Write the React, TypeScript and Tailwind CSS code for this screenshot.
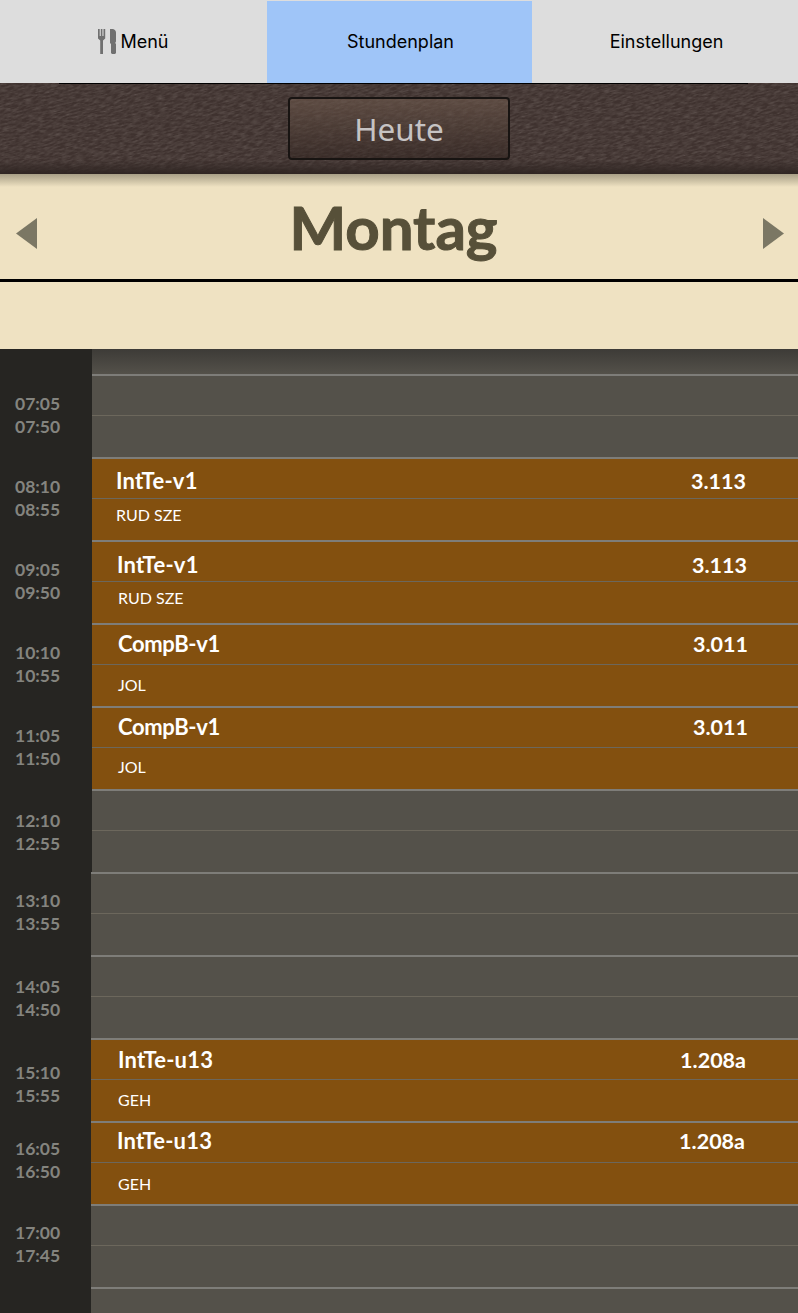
import React from 'react';

type Lesson = {
  title: string;
  room: string;
  teacher: string;
  titleX: string;
  roomX: string;
  teacherX: string;
  titleY: string;
  teacherY: string;
};

type Slot = {
  from: string;
  to: string;
  timeTop: string;
  narrow?: boolean;
  lesson?: Lesson;
};

const slots: Slot[] = [
  {from: '07:05', to: '07:50', timeTop: 'pt-[18px]'},
  {
    from: '08:10',
    to: '08:55',
    timeTop: 'pt-[18px]',
    lesson: {title: 'IntTe-v1', room: '3.113', teacher: 'RUD SZE', titleX: 'pl-[24px] tracking-[0.25px]', roomX: 'pr-[52px]', teacherX: 'pl-[24px]', titleY: 'pt-[8px]', teacherY: 'pt-[4px]'},
  },
  {
    from: '09:05',
    to: '09:50',
    timeTop: 'pt-[18px]',
    lesson: {title: 'IntTe-v1', room: '3.113', teacher: 'RUD SZE', titleX: 'pl-[25px] tracking-[0.25px]', roomX: 'pr-[51px]', teacherX: 'pl-[26px]', titleY: 'pt-[9px]', teacherY: 'pt-[4px]'},
  },
  {
    from: '10:10',
    to: '10:55',
    timeTop: 'pt-[18px]',
    lesson: {title: 'CompB-v1', room: '3.011', teacher: 'JOL', titleX: 'pl-[26px] tracking-[-0.35px]', roomX: 'pr-[50px]', teacherX: 'pl-[26px]', titleY: 'pt-[5px]', teacherY: 'pt-[8px]'},
  },
  {
    from: '11:05',
    to: '11:50',
    timeTop: 'pt-[18px]',
    lesson: {title: 'CompB-v1', room: '3.011', teacher: 'JOL', titleX: 'pl-[26px] tracking-[-0.35px]', roomX: 'pr-[50px]', teacherX: 'pl-[26px]', titleY: 'pt-[5px]', teacherY: 'pt-[7px]'},
  },
  {from: '12:10', to: '12:55', timeTop: 'pt-[20px]'},
  {from: '13:10', to: '13:55', timeTop: 'pt-[17px]', narrow: true},
  {from: '14:05', to: '14:50', timeTop: 'pt-[20px]', narrow: true},
  {
    from: '15:10',
    to: '15:55',
    timeTop: 'pt-[23px]',
    narrow: true,
    lesson: {title: 'IntTe-u13', room: '1.208a', teacher: 'GEH', titleX: 'pl-[27px] tracking-[0.2px]', roomX: 'pr-[52px]', teacherX: 'pl-[27px]', titleY: 'pt-[6px]', teacherY: 'pt-[8px]'},
  },
  {
    from: '16:05',
    to: '16:50',
    timeTop: 'pt-[16px]',
    narrow: true,
    lesson: {title: 'IntTe-u13', room: '1.208a', teacher: 'GEH', titleX: 'pl-[26px] tracking-[0.2px]', roomX: 'pr-[53px]', teacherX: 'pl-[27px]', titleY: 'pt-[4px]', teacherY: 'pt-[9px]'},
  },
  {from: '17:00', to: '17:45', timeTop: 'pt-[17px]', narrow: true},
];

const ForkKnife = () => (
  <svg width="19" height="25" viewBox="0 0 19 25" className="shrink-0" fill="#707070">
    <path d="M0 0h1.700v7h1.100V0h1.600v7h1.100V0h1.700v9.500L5 11.500V25H2.200V11.500L0 9.500z" />
    <path d="M12 0h3c1.600.6 3 1.500 3 3.500v9l-.8 1.500.8 1V24l-1 1h-3l-1-1v-9l-1-1V3z" />
  </svg>
);

const Leather = ({strength}: {strength: number}) => (
  <svg className="absolute inset-0 h-full w-full" aria-hidden="true">
    <filter id="leather" x="0" y="0" width="100%" height="100%">
      <feTurbulence type="fractalNoise" baseFrequency="0.14 0.6" numOctaves="3" seed="7" />
      <feColorMatrix values="0 0 0 0 0.42  0 0 0 0 0.37  0 0 0 0 0.34  1.8 0 0 0 -0.62" />
    </filter>
    <g transform="rotate(-14 400 45)">
      <rect x="-100" y="-240" width="1000" height="570" filter="url(#leather)" opacity={strength} />
    </g>
  </svg>
);

const Tab = ({className, children}: {className: string; children: React.ReactNode}) => (
  <div className={`flex items-center justify-center gap-[3px] pb-px ${className}`}>{children}</div>
);

const TimeCell = ({slot}: {slot: Slot}) => (
  <div
    className={`${slot.timeTop} ${slot.narrow ? 'w-[91px]' : 'w-[92px]'} shrink-0 bg-[#262522] pl-[15px] text-[17.500px] leading-[23px] font-bold text-[#84847f]`}>
    <div>{slot.from}</div>
    <div>{slot.to}</div>
  </div>
);

const SlotBody = ({lesson}: {lesson?: Lesson}) => (
  <div className={`flex min-w-0 flex-1 flex-col border-t-2 border-[#7e7d79] ${lesson ? 'bg-[#83500f]' : 'bg-[#54514a]'}`}>
    <div className="flex h-[40px] items-start justify-between border-b border-[#6c675c] text-[22px] leading-[28px] font-bold text-white">
      {lesson && (
        <>
          <span className={`${lesson.titleX} ${lesson.titleY}`}>{lesson.title}</span>
          <span className={`${lesson.roomX} ${lesson.titleY} text-[21.500px]`}>{lesson.room}</span>
        </>
      )}
    </div>
    {lesson && <div className={`${lesson.teacherX} ${lesson.teacherY} text-[16px] leading-[24px] text-white`}>{lesson.teacher}</div>}
  </div>
);

const App: React.FC = () => {
  return (
    <div className="h-[1313px] w-[798px] overflow-hidden bg-[#262522] font-['Lato',sans-serif]">
      <nav className="flex h-[83px] bg-[#dddddd] text-[18px] text-black font-['Inter',sans-serif]">
        <Tab className="w-[267px] bg-[#dddddd]">
          <ForkKnife />
          <span>Menü</span>
        </Tab>
        <Tab className="mt-px w-[265px] bg-[#9fc5f8] pl-[2px]">Stundenplan</Tab>
        <Tab className="w-[266px] bg-[#dddddd] pl-[3px]">Einstellungen</Tab>
      </nav>

      <header className="relative flex h-[91px] items-start justify-center overflow-hidden bg-[#3f322f]">
        <Leather strength={0.28} />
        <div className="absolute top-0 left-[59px] h-px w-[689px] bg-black" />
        <div className="absolute inset-x-0 bottom-0 h-[14px] bg-gradient-to-b from-transparent to-[#2f2522]" />
        <button className="relative mt-[14px] h-[63px] w-[222px] overflow-hidden rounded-[4px] border-2 border-[#181412] bg-gradient-to-b from-[#5c4a41] to-[#382b27] font-['Noto_Sans',sans-serif] text-[31.500px] text-[#c6c3c3]">
          <Leather strength={0.15} />
          <span className="relative">Heute</span>
        </button>
      </header>

      <section className="relative h-[175px] bg-[#efe2c2]">
        <div className="absolute inset-x-0 top-0 h-[13px] bg-gradient-to-b from-[#a89f86] to-[#efe2c2]" />
        <div className="relative flex h-[108px] items-center justify-between border-b-[3px] border-black pr-[14px] pl-[16px]">
          <svg width="21" height="31" viewBox="0 0 21 31" className="mt-[13px]">
            <path d="M21 0V31L0 15.500z" fill="#7b7764" />
          </svg>
          <h1 className="mt-px mr-[13px] text-[60px] leading-none font-bold text-[#575039] [-webkit-text-stroke:1px_#575039]">Montag</h1>
          <svg width="21" height="31" viewBox="0 0 21 31" className="mt-[13px]">
            <path d="M0 0V31L21 15.500z" fill="#7b7764" />
          </svg>
        </div>
      </section>

      <div className="relative">
        <div className="flex h-[25px]">
          <div className="w-[92px] bg-[#262522]" />
          <div className="flex-1 bg-gradient-to-b from-[#3d3b37] to-[#54514a]" />
        </div>
        {slots.map((slot) => (
          <div key={slot.from} className="flex h-[83px]">
            <TimeCell slot={slot} />
            <SlotBody lesson={slot.lesson} />
          </div>
        ))}
        <div className="flex h-[83px]">
          <div className="w-[91px] bg-[#262522]" />
          <SlotBody />
        </div>
      </div>
    </div>
  );
};

export default App;
